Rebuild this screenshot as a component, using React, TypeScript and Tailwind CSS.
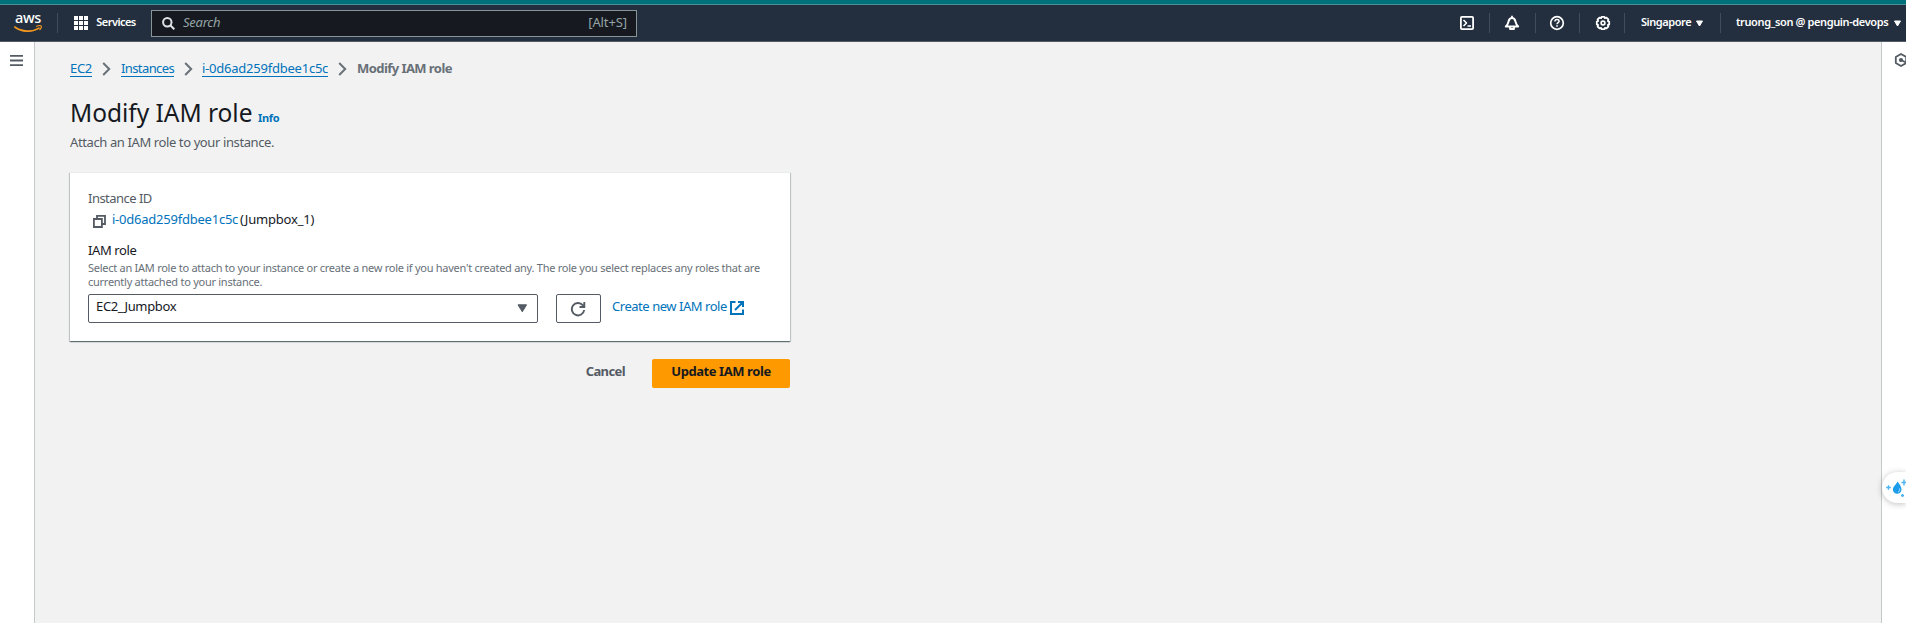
import type { ReactNode } from 'react';

function AwsLogo() {
  return (
    <div className="relative h-[20px] w-[28px] shrink-0">
      <span className="block h-[12px] pl-px text-[14.5px] leading-[9px] font-medium tracking-[-0.4px] text-white">aws</span>
      <svg className="absolute bottom-0 left-0" width="28" height="9" viewBox="0 0 28 9" fill="none" stroke="#f7981f" strokeLinecap="round">
        <path d="M.8 3C7.500 8.200 18.500 8.400 25 4.200" strokeWidth="1.600" />
        <path d="M22.600 2.200c2-.7 4.200-.8 4.600-.2.3.6-.3 2.500-1.300 3.700" strokeWidth="1.200" />
      </svg>
    </div>
  );
}

function Divider() {
  return <div className="h-[20px] w-px shrink-0 bg-[#414d5c]" />;
}

function Caret() {
  return (
    <svg width="7" height="7" viewBox="0 0 7 7" className="mt-px shrink-0">
      <path d="M.5 1h6L3.500 6z" fill="#fff" stroke="#fff" strokeLinejoin="round" />
    </svg>
  );
}

function Glyph({ children }: { children: ReactNode }) {
  return (
    <svg width="16" height="16" viewBox="0 0 16 16" fill="none" stroke="#fff" strokeWidth="1.8" strokeLinejoin="round" className="shrink-0">
      {children}
    </svg>
  );
}

function TopBar() {
  return (
    <header className="h-[42px] shrink-0 border-t-4 border-[#00707a]">
      <div className="flex h-[38px] items-center border-t border-b border-t-[#4a9098] border-b-[#545b64] bg-[#232f3e] pr-[5px] pl-[14px] text-white">
        <AwsLogo />
        <div className="ml-[15px]"><Divider /></div>
        <button className="ml-[16px] flex items-center">
          <svg width="14" height="14" viewBox="0 0 14 14" fill="#fff">
            {[0, 5, 10].map((y) => [0, 5, 10].map((x) => <rect key={`${x}-${y}`} x={x} y={y} width="4" height="4" />))}
          </svg>
          <span className="ml-[8px] w-[40px] pb-[2px] text-[11px] leading-4 font-semibold tracking-[-0.55px] whitespace-nowrap">Services</span>
        </button>
        <div className="ml-[15px] flex h-[27px] w-[486px] items-center border border-[#879596] bg-[#16191f] pr-[9px] pl-[10px] text-[#95a5a6]">
          <svg width="13" height="13" viewBox="0 0 13 13" fill="none" stroke="#e0e4e6" strokeWidth="2">
            <circle cx="5.300" cy="5.300" r="4.200" />
            <path d="M8.500 8.500l3.800 3.800" />
          </svg>
          <span className="ml-[8px] pb-[2px] text-[13px] leading-5 italic tracking-[-0.25px]">Search</span>
          <span className="ml-auto pb-[2px] text-[13px] leading-5 tracking-[-0.1px]">[Alt+S]</span>
        </div>

        <div className="ml-auto flex items-center">
          <Glyph>
            <rect x="1.900" y="1.900" width="12.200" height="12.200" rx="1" />
            <path d="M4.500 5l3 3-3 3M8.500 11h3.500" strokeWidth="1.600" />
          </Glyph>
          <div className="ml-[14px]"><Divider /></div>
          <div className="ml-[14px]">
            <Glyph>
              <path d="M1.800 11.400C4.300 9.300 4.200 7.600 4.700 5.900 5.200 4.100 6.200 3 8 3s2.800 1.100 3.300 2.900c.5 1.700.4 3.400 2.900 5.500z" strokeWidth="2" />
              <path d="M8 .8V3M6 11.500v2.500h4v-2.500" strokeWidth="1.800" />
            </Glyph>
          </div>
          <div className="ml-[15px]"><Divider /></div>
          <div className="ml-[13px]">
            <Glyph>
              <circle cx="8" cy="8" r="6.300" strokeWidth="1.700" />
              <path d="M5.900 6.500c0-2.800 4.200-2.700 4.200-.3 0 1.500-2.100 1.300-2.100 3.100" strokeWidth="1.500" />
              <path d="M8 10.300v1.500" strokeWidth="1.600" />
            </Glyph>
          </div>
          <div className="ml-[14px]"><Divider /></div>
          <div className="ml-[15px]">
            <Glyph>
              <path d="M6.600 1.800h2.800l.5 1.300 1.600-.5 1.900 1.900-.5 1.600 1.300.5v2.800l-1.300.5.5 1.600-1.900 1.900-1.600-.5-.5 1.300H6.600l-.5-1.300-1.600.5-1.900-1.900.5-1.600-1.300-.5V6.600l1.300-.5-.5-1.600 1.900-1.900 1.600.5z" />
              <circle cx="8" cy="8" r="1.900" strokeWidth="1.600" />
            </Glyph>
          </div>
          <div className="ml-[13px]"><Divider /></div>
          <button className="ml-[16px] flex items-center">
            <span className="mr-[5px] w-[50px] pb-[2px] text-[11px] leading-4 font-semibold tracking-[-0.45px] whitespace-nowrap">Singapore</span>
            <Caret />
          </button>
          <div className="ml-[17px]"><Divider /></div>
          <button className="ml-[15px] flex items-center">
            <span className="mr-[6px] w-[152px] pb-[2px] text-[11px] leading-4 font-semibold tracking-[-0.38px] whitespace-nowrap">truong_son @ penguin-devops</span>
            <Caret />
          </button>
        </div>
      </div>
    </header>
  );
}

function Chevron() {
  return (
    <svg width="10" height="14" viewBox="0 0 10 14" fill="none" stroke="#687078" strokeWidth="2" className="mt-[3px] shrink-0">
      <path d="M1.200 1l6 6-6 6" />
    </svg>
  );
}

function Crumb({ children }: { children: ReactNode }) {
  return (
    <a href="#" className="h-[19px] border-b border-[#0073bb] leading-5 whitespace-nowrap text-[#0073bb]">
      {children}
    </a>
  );
}

function Breadcrumbs() {
  return (
    <nav className="flex h-5 items-start">
      <Crumb><span className="block w-[22px] tracking-[-0.3px]">EC2</span></Crumb>
      <div className="ml-[10px] pt-px"><Chevron /></div>
      <div className="ml-[9px] flex"><Crumb><span className="block w-[53px] tracking-[-0.6px]">Instances</span></Crumb></div>
      <div className="ml-[10px] pt-px"><Chevron /></div>
      <div className="ml-[8px] flex"><Crumb><span className="block w-[126px] tracking-[-0.23px]">i-0d6ad259fdbee1c5c</span></Crumb></div>
      <div className="ml-[10px] pt-px"><Chevron /></div>
      <span className="ml-[9px] leading-5 font-bold tracking-[-0.56px] whitespace-nowrap text-[#687078]">Modify IAM role</span>
    </nav>
  );
}

function RoleCard() {
  return (
    <section className="h-[169px] w-[720px] border-t border-[#eaeded] bg-white px-[18px] pt-[15px] shadow-[0_1px_1px_0_rgba(0,28,36,0.45),1px_1px_1px_0_rgba(0,28,36,0.15),-1px_1px_1px_0_rgba(0,28,36,0.15)]">
      <div className="h-[21px] leading-5 tracking-[-0.52px] text-[#545b64]">Instance ID</div>
      <div className="flex h-[31px] items-start leading-5">
        <svg width="13" height="13" viewBox="0 0 13 13" fill="none" stroke="#545b64" strokeWidth="1.800" className="mt-[6px] ml-[5px] shrink-0">
          <path d="M.9 4h8v8h-8zM4 3.500V.9h8V9H9.500" />
        </svg>
        <a href="#" className="ml-[6px] w-[126px] tracking-[-0.23px] whitespace-nowrap text-[#0073bb]">i-0d6ad259fdbee1c5c</a>
        <span className="ml-[2px] tracking-[-0.2px] whitespace-nowrap">(Jumpbox_1)</span>
      </div>
      <div className="h-[21px] leading-5 tracking-[-0.4px]">IAM role</div>
      <p className="w-[684px] text-[11px] leading-[14px] tracking-[-0.262px] text-[#687078]">
        Select an IAM role to attach to your instance or create a new role if you haven't created any. The role you select replaces any roles that are currently attached to your instance.
      </p>
      <div className="mt-[5px] flex">
        <button className="flex h-[29px] w-[450px] items-start justify-between rounded-[2px] border border-[#545b64] pr-[9px] pl-[7px]">
          <span className="mt-px leading-5 tracking-[-0.35px]">EC2_Jumpbox</span>
          <svg width="11" height="9" viewBox="0 0 11 9" className="mt-[9px]">
            <path d="M1 .8h8.600L5.300 7.800z" fill="#545b64" stroke="#545b64" strokeLinejoin="round" />
          </svg>
        </button>
        <button className="ml-[18px] flex h-[29px] w-[45px] items-center justify-center rounded-[2px] border border-[#545b64] pr-px">
          <svg width="16" height="16" viewBox="0 0 16 16" fill="none" stroke="#545b64" strokeWidth="1.900">
            <path d="M14.200 9A6.200 6.200 0 1 1 12.800 4.200l1.200 1.500" />
            <path d="M14.300 1v5H9.500" />
          </svg>
        </button>
        <a href="#" className="ml-[11px] flex items-start text-[#0073bb]">
          <span className="mt-[2px] w-[115px] leading-5 tracking-[-0.46px] whitespace-nowrap">Create new IAM role</span>
          <svg width="14" height="14" viewBox="0 0 14 14" fill="none" stroke="#0073bb" strokeWidth="2" className="mt-[7px] ml-[3px] shrink-0">
            <path d="M5.500 1H1v12h12V8.500M8 1h5v5M13 1L5 9" />
          </svg>
        </a>
      </div>
    </section>
  );
}

function Assistant() {
  return (
    <div className="absolute top-[472px] right-0 h-[31px] w-[24px] rounded-l-full bg-white shadow-[0_1px_6px_rgba(0,0,0,0.25)]">
      <svg width="24" height="31" viewBox="0 0 24 31">
        <path d="M15.500 9.500c2 3 4 5 4 8a4.300 4.300 0 0 1-8.600 0c0-3 3.100-4.600 4.600-8z" fill="#1c9cea" />
        <path d="M17.500 16.500c.6 1.500 0 3-1.300 3.500" stroke="#bfe4fb" fill="none" />
        <path d="M6.500 13.200v4.600M4.200 15.500h4.600M22 7.500v6M19.500 10.500H24M20.500 22v3M19 23.500h3" stroke="#4bb3f0" strokeWidth="1.400" />
      </svg>
    </div>
  );
}

export default function App() {
  return (
    <div className="relative flex h-[623px] w-full flex-col overflow-hidden bg-[#f2f2f2] font-['Noto_Sans',sans-serif] text-[13px] text-[#16191f]">
      <TopBar />
      <div className="flex flex-1">
        <aside className="w-[35px] shrink-0 border-r border-[#c3c8ca] bg-white pt-[13px] pl-[10px]">
          <svg width="13" height="11" viewBox="0 0 13 11" fill="#545b64">
            <path d="M0 0h13v1.800H0zM0 4.600h13v1.800H0zM0 9.200h13V11H0z" />
          </svg>
        </aside>
        <main className="flex-1 pt-[16px] pl-[35px]">
          <Breadcrumbs />
          <div className="mt-[19px] flex h-8 items-baseline leading-8">
            <h1 className="w-[188px] text-[24.500px] leading-8 font-normal tracking-[-0.03px] whitespace-nowrap">Modify IAM role</h1>
            <a href="#" className="text-[11px] leading-4 font-bold tracking-[-0.35px] text-[#0073bb]">Info</a>
          </div>
          <p className="mt-[3px] mb-[20px] leading-5 tracking-[-0.39px] text-[#545b64]">Attach an IAM role to your instance.</p>
          <RoleCard />
          <div className="mt-[18px] flex w-[720px] justify-end font-bold">
            <button className="mr-[27px] flex h-[29px] items-start pt-[2px] leading-5 tracking-[-0.6px] text-[#545b64]">Cancel</button>
            <button className="flex h-[29px] w-[138px] items-start justify-center rounded-[2px] bg-[#ff9900] pt-[2px] leading-5 tracking-[-0.42px] whitespace-nowrap">Update IAM role</button>
          </div>
        </main>
        <aside className="w-[25px] shrink-0 overflow-hidden border-l border-[#c3c8ca] bg-white pt-[11px] pl-[12px]">
          <svg width="14" height="14" viewBox="0 0 14 14" fill="none" stroke="#545b64" strokeWidth="1.800">
            <path d="M7 1l5.200 3v6L7 13l-5.200-3V4z" strokeLinejoin="round" />
            <circle cx="7" cy="7" r="1.200" fill="#545b64" />
            <path d="M7 7l5 2.500" />
          </svg>
        </aside>
      </div>
      <Assistant />
    </div>
  );
}
